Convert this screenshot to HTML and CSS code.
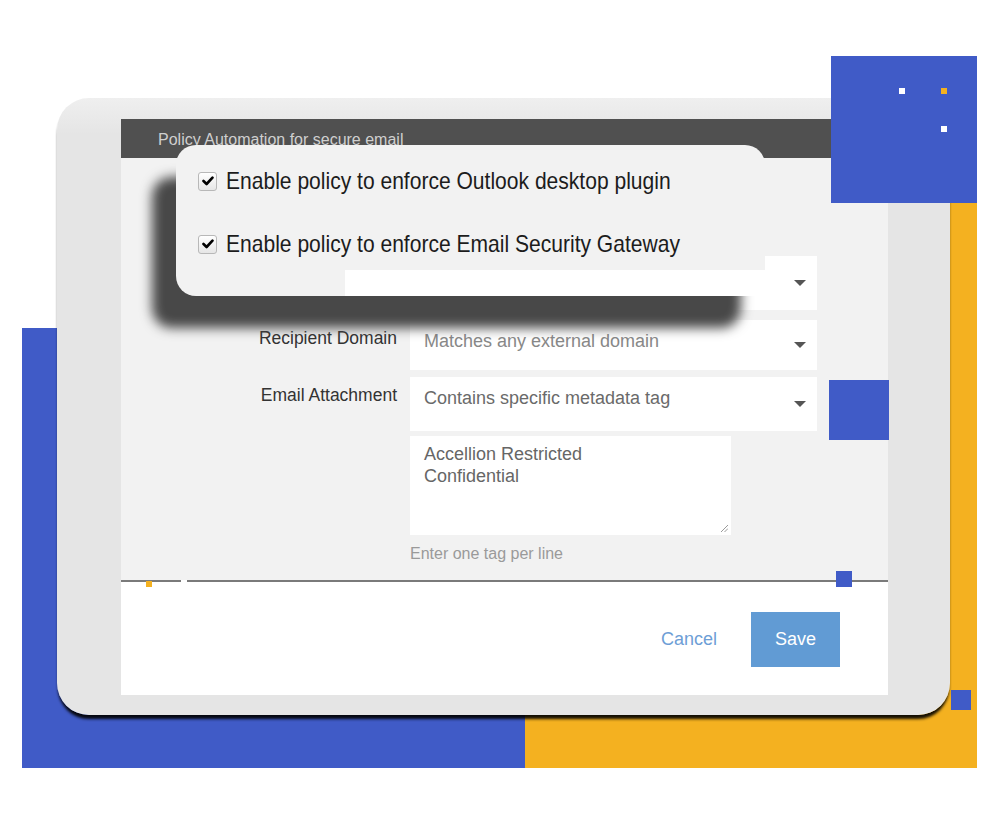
FILE: index.html
```html
<!DOCTYPE html>
<html lang="en">
<head>
<meta charset="utf-8">
<title>Policy Automation for secure email</title>
<link rel="stylesheet" href="styles.css">
</head>
<body>
<div class="stage">
  <div class="deco deco-blue-left"></div>
  <div class="deco deco-yellow"></div>

  <div class="device">
    <div class="screen">
      <div class="screen-header">Policy Automation for secure email</div>
      <div class="screen-body">
        <div class="select select-wide"><span class="caret"></span></div>
        <div class="form-grid">
          <div class="label">Recipient Domain</div>
          <div class="select select-short select-light">Matches any external domain<span class="caret"></span></div>
          <div class="label">Email Attachment</div>
          <div class="field-stack">
            <div class="select">Contains specific metadata tag<span class="caret"></span></div>
            <div class="textarea">Accellion Restricted<br>Confidential
              <svg class="grip" width="8" height="8" viewBox="0 0 8 8"><path d="M8 1 L1 8 M8 4.5 L4.5 8" stroke="#9a9a9a" stroke-width="1" fill="none"/></svg>
            </div>
            <div class="hint">Enter one tag per line</div>
          </div>
        </div>
      </div>
      <div class="divider">
        <span class="divider-gap"></span>
        <span class="divider-dot-orange"></span>
        <span class="divider-dot-blue"></span>
      </div>
      <div class="screen-footer">
        <button class="btn-cancel" type="button">Cancel</button>
        <button class="btn-save" type="button">Save</button>
      </div>
    </div>
  </div>

  <div class="popup">
    <div class="check-row">
      <span class="checkbox"><svg width="12" height="10" viewBox="0 0 12 10"><path d="M1.5 5 L4.6 8 L10.5 1.6" stroke="#000" stroke-width="2.6" fill="none" stroke-linecap="round" stroke-linejoin="round"/></svg></span>
      <span class="check-label">Enable policy to enforce Outlook desktop plugin</span>
    </div>
    <div class="check-row">
      <span class="checkbox"><svg width="12" height="10" viewBox="0 0 12 10"><path d="M1.5 5 L4.6 8 L10.5 1.6" stroke="#000" stroke-width="2.6" fill="none" stroke-linecap="round" stroke-linejoin="round"/></svg></span>
      <span class="check-label">Enable policy to enforce Email Security Gateway</span>
    </div>
  </div>

  <div class="deco deco-blue-tr">
    <span class="tr-dot tr-dot-a"></span>
    <span class="tr-dot tr-dot-b"></span>
    <span class="tr-dot tr-dot-c"></span>
  </div>
  <div class="deco deco-blue-mid"></div>
  <div class="deco deco-blue-br"></div>
</div>
</body>
</html>
```

FILE: styles.css
```css
html, body {
  margin: 0;
  padding: 0;
  background: #ffffff;
  font-family: "Liberation Sans", Arial, sans-serif;
}

.stage {
  position: relative;
  width: 1000px;
  height: 834px;
  overflow: hidden;
  background: #ffffff;
}

.deco {
  position: absolute;
  background: #405bc7;
}

.deco-blue-left {
  left: 22px;
  top: 328px;
  width: 503px;
  height: 440px;
}

.deco-yellow {
  left: 525px;
  top: 203px;
  width: 452px;
  height: 565px;
  background: #f4b120;
}

.deco-blue-tr {
  left: 831px;
  top: 56px;
  width: 146px;
  height: 147px;
}

.tr-dot {
  position: absolute;
  width: 6px;
  height: 6px;
  background: #ffffff;
}
.tr-dot-a { left: 68px; top: 32px; }
.tr-dot-b { left: 110px; top: 32px; background: #f4b120; }
.tr-dot-c { left: 110px; top: 70px; }

.deco-blue-mid {
  left: 829px;
  top: 380px;
  width: 60px;
  height: 60px;
}

.deco-blue-br {
  left: 951px;
  top: 690px;
  width: 20px;
  height: 20px;
}

/* device */
.device {
  position: absolute;
  left: 57px;
  top: 98px;
  width: 893px;
  height: 617px;
  box-sizing: border-box;
  padding: 21px 62px 20px 64px;
  border-radius: 32px;
  background: linear-gradient(#efefef, #e5e5e5 36px);
  box-shadow: 0 5px 3px -1px rgba(0, 0, 0, 0.92);
}

.screen {
  display: flex;
  flex-direction: column;
  height: 100%;
}

.screen-header {
  height: 39px;
  box-sizing: border-box;
  padding: 11px 0 0 37px;
  background: #505050;
  color: #cfcfcf;
  font-size: 16px;
  line-height: 20px;
  white-space: nowrap;
}

.screen-body {
  height: 422px;
  box-sizing: border-box;
  padding-top: 98px;
  background: #f2f2f2;
}

.select {
  position: relative;
  box-sizing: border-box;
  height: 54px;
  padding: 11px 40px 0 14px;
  background: #ffffff;
  color: #6a6a6a;
  font-size: 18px;
  line-height: 20px;
  white-space: nowrap;
}

.select-wide {
  margin-left: 224px;
  width: 472px;
}

.select-short {
  height: 50px;
}

.select-light {
  color: #888888;
}

.caret {
  position: absolute;
  right: 11px;
  top: calc(50% - 3px);
  width: 0;
  height: 0;
  border-left: 6px solid transparent;
  border-right: 6px solid transparent;
  border-top: 6px solid #555555;
}

.form-grid {
  display: grid;
  grid-template-columns: 276px 407px;
  column-gap: 13px;
  row-gap: 7px;
  margin-top: 10px;
}

.label {
  padding-top: 8px;
  text-align: right;
  font-size: 17.5px;
  line-height: 20px;
  color: #333333;
  white-space: nowrap;
}

.field-stack {
  display: flex;
  flex-direction: column;
  gap: 5px;
}

.textarea {
  position: relative;
  box-sizing: border-box;
  width: 321px;
  height: 99px;
  padding: 7px 14px 0;
  background: #ffffff;
  color: #666666;
  font-size: 18px;
  line-height: 22px;
}

.grip {
  position: absolute;
  right: 3px;
  bottom: 3px;
}

.hint {
  margin-top: 5px;
  font-size: 16px;
  line-height: 18px;
  color: #9a9a9a;
}

.divider {
  position: relative;
  height: 2px;
  background: #7a7a7a;
}

.divider-gap {
  position: absolute;
  left: 60px;
  top: 0;
  width: 6px;
  height: 2px;
  background: #ffffff;
}

.divider-dot-orange {
  position: absolute;
  left: 25px;
  top: 1px;
  width: 6px;
  height: 6px;
  background: #f4b120;
}

.divider-dot-blue {
  position: absolute;
  left: 715px;
  top: -9px;
  width: 16px;
  height: 16px;
  background: #405bc7;
}

.screen-footer {
  flex: 1;
  display: flex;
  justify-content: flex-end;
  align-items: flex-start;
  padding: 30px 48px 0 0;
  background: #ffffff;
}

.btn-cancel,
.btn-save {
  font-family: "Liberation Sans", Arial, sans-serif;
  font-size: 18px;
  border: 0;
  height: 55px;
  padding: 0;
  cursor: pointer;
}

.btn-cancel {
  background: transparent;
  color: #6d9ed6;
  margin-right: 34px;
}

.btn-save {
  width: 89px;
  background: #619bd4;
  color: #ffffff;
}

/* popup overlay */
.popup {
  position: absolute;
  left: 176px;
  top: 145px;
  width: 589px;
  height: 151px;
  box-sizing: border-box;
  padding: 24px 0 0 22px;
  display: flex;
  flex-direction: column;
  gap: 39px;
  background: #f2f2f2;
  border-radius: 20px;
  box-shadow: -24px 32px 12px #484848;
}

.popup::after {
  content: "";
  position: absolute;
  left: 169px;
  top: 125px;
  right: 0;
  bottom: 0;
  background: #ffffff;
}

.check-row {
  display: flex;
  align-items: center;
  height: 24px;
}

.checkbox {
  flex: none;
  display: flex;
  align-items: center;
  justify-content: center;
  width: 19px;
  height: 19px;
  box-sizing: border-box;
  margin-right: 9px;
  border: 1px solid #b8b8b8;
  border-radius: 3px;
  background: linear-gradient(#ffffff, #e6e6e6);
}

.check-label {
  display: inline-block;
  font-size: 24px;
  line-height: 24px;
  color: #1c1c1c;
  white-space: nowrap;
  transform: scaleX(0.877);
  transform-origin: left center;
}
```
